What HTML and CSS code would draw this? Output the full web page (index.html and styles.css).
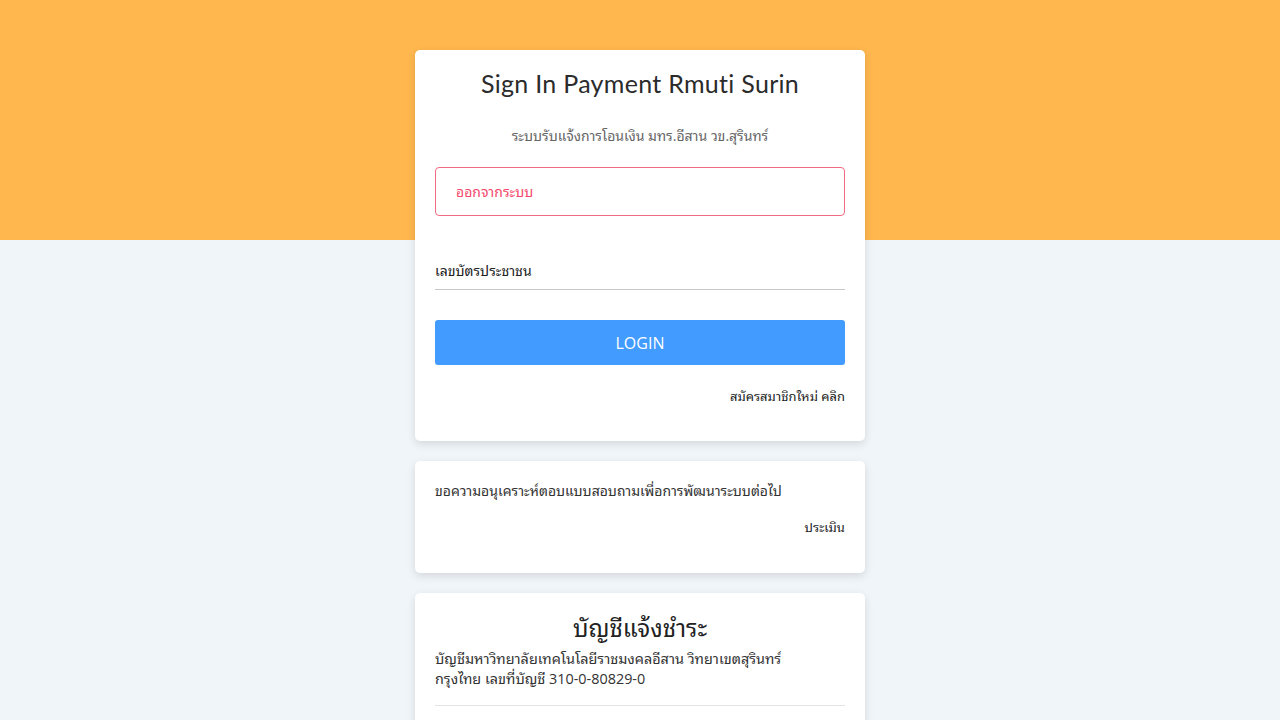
FILE: index.html
```html
<!DOCTYPE html>
<html lang="th">
<head>
<meta charset="utf-8">
<title>Sign In Payment Rmuti Surin</title>
<link rel="stylesheet" href="styles.css">
</head>
<body>
<div class="band"></div>
<main class="wrap">
  <section class="card login">
    <h1 class="title">Sign In Payment Rmuti Surin</h1>
    <p class="subtitle">ระบบรับแจ้งการโอนเงิน มทร.อีสาน วข.สุรินทร์</p>
    <div class="alert">ออกจากระบบ</div>
    <div class="field">
      <input class="input" type="text" placeholder="เลขบัตรประชาชน">
    </div>
    <button class="btn">LOGIN</button>
    <div class="right"><a class="link" href="#">สมัครสมาชิกใหม่ คลิก</a></div>
  </section>
  <section class="card survey">
    <p class="text">ขอความอนุเคราะห์ตอบแบบสอบถามเพื่อการพัฒนาระบบต่อไป</p>
    <div class="right"><a class="link" href="#">ประเมิน</a></div>
  </section>
  <section class="card account">
    <h2 class="acc-title">บัญชีแจ้งชำระ</h2>
    <p class="acc-text">บัญชีมหาวิทยาลัยเทคโนโลยีราชมงคลอีสาน วิทยาเขตสุรินทร์<br>กรุงไทย เลขที่บัญชี 310-0-80829-0</p>
    <hr class="rule">
    <p class="acc-text">&nbsp;</p>
  </section>
</main>
</body>
</html>
```
FILE: styles.css
```css
html, body {
  margin: 0;
  padding: 0;
}
body {
  background: #f0f5f9;
  font-family: "Open Sans", "Noto Sans Thai Looped", "Noto Sans", sans-serif;
  color: #333;
  min-height: 720px;
  position: relative;
}
.band {
  position: absolute;
  left: 0;
  top: 0;
  width: 100%;
  height: 240px;
  background: #ffb74e;
}
.wrap {
  position: relative;
  width: 450px;
  margin: 0 auto;
  padding-top: 50px;
  display: flex;
  flex-direction: column;
  gap: 20px;
}
.card {
  background: #fff;
  border-radius: 5px;
  box-shadow: 0 3px 8px rgba(0, 0, 0, 0.12);
  padding: 20px;
}
.title {
  margin: 0;
  text-align: center;
  font-family: "Lato", "Noto Sans", sans-serif;
  font-weight: 400;
  font-size: 25px;
  line-height: 26px;
  color: #2b2b2b;
  letter-spacing: 0.3px;
}
.subtitle {
  margin: 28px 0 0;
  text-align: center;
  font-size: 14px;
  line-height: 24px;
  color: #666;
}
.alert {
  margin-top: 19px;
  height: 47px;
  border: 1px solid #f06a80;
  border-radius: 4px;
  color: #f4476b;
  font-size: 14px;
  line-height: 47px;
  padding-left: 20px;
}
.field {
  margin-top: 40px;
}
.input {
  display: block;
  width: 100%;
  box-sizing: border-box;
  border: 0;
  border-bottom: 1px solid #c8c8c8;
  padding: 0 0 5px;
  height: 34px;
  font-family: "Open Sans", "Noto Sans Thai Looped", "Noto Sans", sans-serif;
  font-size: 14px;
  background: transparent;
  outline: none;
}
.input::placeholder {
  color: #222;
}
.btn {
  display: block;
  width: 100%;
  margin-top: 30px;
  height: 45px;
  border: 0;
  border-radius: 3px;
  background: #429bfe;
  color: #fff;
  font-family: "Open Sans", "Noto Sans", sans-serif;
  font-size: 16px;
}
.right {
  text-align: right;
  margin-top: 20px;
  margin-bottom: 14px;
  font-size: 13px;
  line-height: 22px;
}
.link {
  color: #222;
  text-decoration: none;
}
.survey .text {
  margin: 0;
  font-size: 14px;
  line-height: 20px;
  color: #333;
}
.survey .right {
  margin-top: 15px;
  margin-bottom: 15px;
}
.acc-title {
  margin: 0;
  text-align: center;
  font-weight: 400;
  font-size: 24px;
  line-height: 30px;
  color: #222;
}
.acc-text {
  margin: 6px 0 0;
  font-size: 14.4px;
  line-height: 20px;
  color: #333;
}
.rule {
  border: 0;
  border-top: 1px solid #e3e3e3;
  margin: 16px 0 0;
}
```
